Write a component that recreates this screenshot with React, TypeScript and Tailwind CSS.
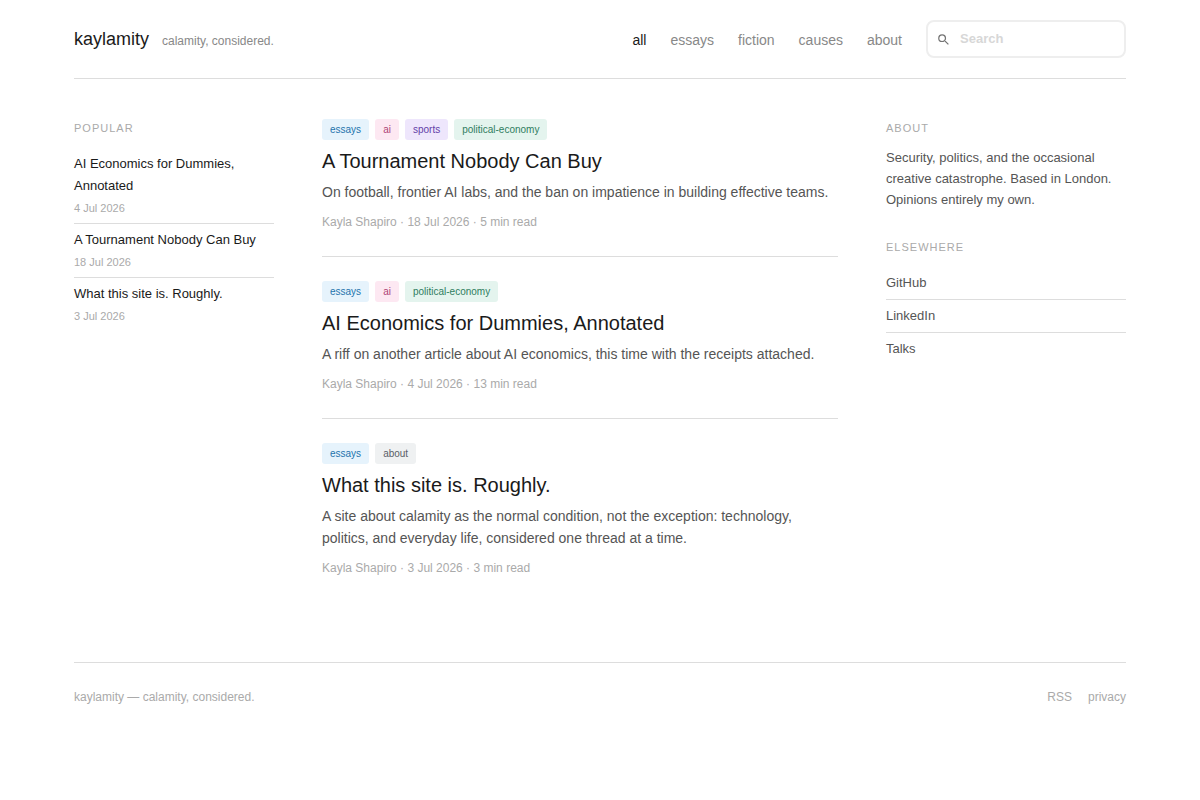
const navLinks = ['all', 'essays', 'fiction', 'causes', 'about'];

const tagColors: Record<string, string> = {
  essays: 'bg-[#e6f3fc] text-[#2474ac]',
  ai: 'bg-[#fde8f2] text-[#ae4476]',
  sports: 'bg-[#eee6fc] text-[#6440a8]',
  'political-economy': 'bg-[#e4f4ee] text-[#2f7d60]',
  about: 'bg-[#eff1f2] text-[#5a6068]',
};

const posts = [
  {
    title: 'A Tournament Nobody Can Buy',
    tags: ['essays', 'ai', 'sports', 'political-economy'],
    summary: 'On football, frontier AI labs, and the ban on impatience in building effective teams.',
    date: '18 Jul 2026',
    readTime: '5 min read',
  },
  {
    title: 'AI Economics for Dummies, Annotated',
    tags: ['essays', 'ai', 'political-economy'],
    summary: 'A riff on another article about AI economics, this time with the receipts attached.',
    date: '4 Jul 2026',
    readTime: '13 min read',
  },
  {
    title: 'What this site is. Roughly.',
    tags: ['essays', 'about'],
    summary:
      'A site about calamity as the normal condition, not the exception: technology, politics, and everyday life, considered one thread at a time.',
    date: '3 Jul 2026',
    readTime: '3 min read',
  },
];

const popular = [posts[1], posts[0], posts[2]];
const elsewhere = ['GitHub', 'LinkedIn', 'Talks'];

function SearchBox() {
  return (
    <div className="relative w-[200px]">
      <svg
        className="absolute left-3 top-[14px] size-[11px] pointer-events-none"
        viewBox="0 0 18 18"
        fill="#747474"
        aria-hidden="true"
      >
        <path d="M12.755 11.255h-.79l-.28-.27a6.47 6.47 0 0 0 1.57-4.23 6.5 6.5 0 1 0-6.5 6.5c1.61 0 3.09-.59 4.23-1.57l.27.28v.79l5 4.99 1.49-1.49-4.99-5Zm-6 0a4.494 4.494 0 0 1-4.5-4.5c0-2.49 2.01-4.5 4.5-4.5s4.5 2.01 4.5 4.5-2.01 4.5-4.5 4.5Z" />
      </svg>
      <input
        type="search"
        aria-label="Search"
        placeholder="Search"
        className="block w-full h-[38px] pl-8 pr-3 pb-0.5 rounded-lg border-2 border-[#eee] bg-white text-[13px] font-bold text-[#393939] placeholder:text-[#d7d7d7] outline-none"
      />
    </div>
  );
}

function Header() {
  return (
    <header className="flex flex-wrap items-center justify-between py-5 border-b border-[#ddd]">
      <div className="flex items-baseline gap-[13px]">
        <a href="#" className="text-lg text-[#1a1a1a]">
          kaylamity
        </a>
        <span className="text-xs text-[#888]">calamity, considered.</span>
      </div>
      <div className="flex items-center gap-6">
        <nav className="flex gap-6 pt-0.5 text-sm leading-[22px]">
          {navLinks.map((link) => (
            <a key={link} href="#" className={link === 'all' ? 'text-[#1a1a1a]' : 'text-[#888]'}>
              {link}
            </a>
          ))}
        </nav>
        <SearchBox />
      </div>
    </header>
  );
}

function SectionHeading({ children }: { children: string }) {
  return (
    <h2 className="mb-2.5 text-[11px] leading-[18px] tracking-[1px] uppercase text-[#aaa]">
      {children}
    </h2>
  );
}

function PopularList() {
  return (
    <aside>
      <SectionHeading>Popular</SectionHeading>
      <ul className="pt-px divide-y divide-[#ddd]">
        {popular.map((post) => (
          <li key={post.title} className="pt-[5px] pb-1.5">
            <a href="#" className="block text-[13px] leading-[22px] text-[#1a1a1a]">
              {post.title}
            </a>
            <p className="mt-0.5 text-[11px] leading-[18px] text-[#aaa]">{post.date}</p>
          </li>
        ))}
      </ul>
    </aside>
  );
}

function PostCard({ post }: { post: (typeof posts)[number] }) {
  return (
    <article className="py-6 first:pt-0">
      <div className="flex flex-wrap gap-1.5">
        {post.tags.map((tag) => (
          <a
            key={tag}
            href="#"
            className={`px-2 py-0.5 rounded-[3px] text-[10px] leading-[17px] ${tagColors[tag]}`}
          >
            {tag}
          </a>
        ))}
      </div>
      <h3 className="mt-2 text-xl leading-[26px] text-[#1a1a1a]">
        <a href="#">{post.title}</a>
      </h3>
      <p className="mt-[7px] text-sm leading-[22px] text-[#555]">{post.summary}</p>
      <p className="mt-[9px] text-xs leading-5 text-[#aaa]">
        Kayla Shapiro · {post.date} · {post.readTime}
      </p>
    </article>
  );
}

function Sidebar() {
  return (
    <aside>
      <SectionHeading>About</SectionHeading>
      <p className="mb-7 text-[13px] leading-[21px] text-[#555]">
        Security, politics, and the occasional creative catastrophe. Based in London. Opinions
        entirely my own.
      </p>
      <SectionHeading>Elsewhere</SectionHeading>
      <ul className="pt-px divide-y divide-[#ddd]">
        {elsewhere.map((name) => (
          <li key={name} className="py-[5px]">
            <a href="#" className="block text-[13px] leading-[22px] text-[#555]">
              {name}
            </a>
          </li>
        ))}
      </ul>
    </aside>
  );
}

export default function App() {
  return (
    <div className="max-w-[1100px] mx-auto px-6 font-['Liberation_Sans',Arial,sans-serif]">
      <Header />
      <main className="grid grid-cols-[200px_minmax(0,1fr)_240px] gap-12 pt-10 pb-[60px]">
        <PopularList />
        <div className="divide-y divide-[#ddd]">
          {posts.map((post) => (
            <PostCard key={post.title} post={post} />
          ))}
        </div>
        <Sidebar />
      </main>
      <footer className="flex justify-between py-6 border-t border-[#ddd] text-xs leading-5 text-[#aaa]">
        <span>kaylamity — calamity, considered.</span>
        <div className="flex gap-4">
          <a href="#">RSS</a>
          <a href="#">privacy</a>
        </div>
      </footer>
    </div>
  );
}
